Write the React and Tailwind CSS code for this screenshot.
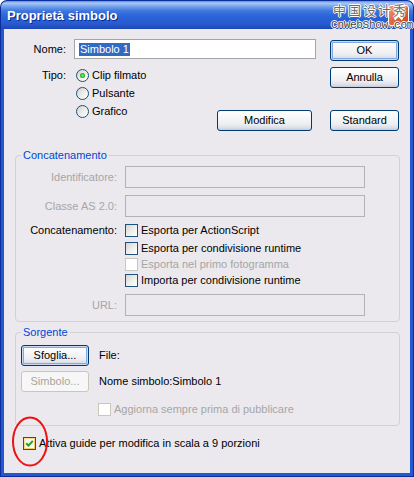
import React from "react";

function Btn({ children, className = "", def = false, disabled = false }) {
  const base = disabled
    ? "border-[#c9c7ba] bg-[#f7f7f7] text-[#a6a69a]"
    : "border-[#003c74] text-black bg-[linear-gradient(180deg,#ffffff_0%,#f7f7f7_35%,#eceef2_70%,#d9dde6_90%,#c3c9d6_100%)]";
  const d = def ? "shadow-[inset_0_0_0_1px_#c8daf8,inset_0_0_0_2px_#84a8e6]" : "";
  return (
    <div className={`flex items-center justify-center rounded-[3px] border text-[11px] ${base} ${d} ${className}`}>
      {children}
    </div>
  );
}

function Radio({ checked }) {
  return (
    <span className="flex items-center justify-center w-[13px] h-[13px] shrink-0 rounded-full border border-[#1c5180] bg-[linear-gradient(135deg,#d3d1cb_0%,#eeeeec_55%,#ffffff_100%)]">
      {checked && (
        <span className="w-[5px] h-[5px] rounded-full bg-[radial-gradient(circle,#7cf07c_0%,#2bb02b_60%,#168a16_100%)]" />
      )}
    </span>
  );
}

function Check({ disabled = false, checked = false, hover = false }) {
  if (disabled) {
    return <span className="w-[13px] h-[13px] shrink-0 border border-[#cac8bb] bg-white" />;
  }
  return (
    <span
      className={`flex items-center justify-center w-[13px] h-[13px] shrink-0 border border-[#1c5180] ${
        hover
          ? "bg-[linear-gradient(135deg,#fbe2a4_0%,#f9c25a_100%)]"
          : "bg-[linear-gradient(135deg,#d6d4cd_0%,#efefec_55%,#ffffff_100%)]"
      }`}
    >
      {hover && (
        <span className="flex items-center justify-center w-[9px] h-[9px] bg-[linear-gradient(135deg,#f3f2ed_0%,#ffffff_100%)]">
          {checked && (
            <svg width="9" height="9" viewBox="0 0 9 9">
              <path d="M1.2 4.2 L3.5 6.6 L7.8 1.8" fill="none" stroke="#21a121" strokeWidth="2" />
            </svg>
          )}
        </span>
      )}
    </span>
  );
}

export default function App() {
  return (
    <div className="relative w-[414px] h-[477px] overflow-hidden bg-white font-['Liberation_Sans',Arial,sans-serif]">
      <div className="flex flex-col w-[414px] h-[477px]">
        {/* Title bar */}
        <div className="relative flex items-center h-[29px] shrink-0 rounded-t-[7px] border-t border-x border-[#0a2f9c] bg-[linear-gradient(180deg,#5f90e4_0%,#a9c7f4_8%,#7ba6ec_18%,#3f77e0_35%,#2b63d8_55%,#285bd1_80%,#1e47b6_100%)] pl-[6px] pr-[4px]">
          <span className="text-white font-bold text-[13px] leading-[16px] mt-[2px] [text-shadow:1px_1px_0_#0b2a8a]">
            Proprietà simbolo
          </span>
          <div className="ml-auto mt-[1px] flex items-center justify-center w-[21px] h-[21px] rounded-[3px] border border-white bg-[linear-gradient(135deg,#ef9b7d_0%,#e06a44_45%,#c8441e_100%)]">
            <svg width="11" height="11" viewBox="0 0 11 11">
              <path d="M1.5 1.5 L9.5 9.5 M9.5 1.5 L1.5 9.5" stroke="#fff" strokeWidth="2" />
            </svg>
          </div>
          {/* watermark overlay */}
          <div className="absolute right-[0px] top-[-1px] flex flex-col items-end pointer-events-none">
            <span className="mr-[5px] font-['Noto_Sans_CJK_SC',sans-serif] text-[13px] leading-[19px] tracking-[2px] text-[#6a6a6a] [text-shadow:1px_0_0_#fff,-1px_0_0_#fff,0_1px_0_#fff,0_-1px_0_#fff]">
              中国设计秀
            </span>
            <span className="font-['Liberation_Mono',monospace] text-[11px] leading-[12px] tracking-[-0.3px] text-[#444] [text-shadow:1px_0_0_#fff,-1px_0_0_#fff,0_1px_0_#fff,0_-1px_0_#fff]">
              CnWebShow.com
            </span>
          </div>
        </div>

        {/* Body with frame */}
        <div className="flex flex-1 bg-[#2457d2] border-x border-b border-[#0a2f9c] px-[3px] pb-[3px]">
          <div className="relative flex flex-col flex-1 bg-[#ebe9ed] text-[11px] leading-[13px] text-black">
            {/* Top area */}
            <div className="flex items-start">
              <div className="flex flex-col w-[312px]">
                <div className="flex items-center mt-[10px] h-[20px]">
                  <span className="w-[62px] text-right">Nome:</span>
                  <div className="ml-[8px] flex items-center w-[242px] h-[20px] border border-[#a5a5a8] bg-white pl-[4px]">
                    <span className="bg-[#316ac5] text-white px-[1px] leading-[13px]">Simbolo 1</span>
                  </div>
                </div>
                <div className="flex items-start mt-[7px]">
                  <span className="w-[62px] text-right h-[18px] leading-[18px]">Tipo:</span>
                  <div className="flex flex-col ml-[10px]">
                    <div className="flex items-center h-[18px] gap-[3px]">
                      <Radio checked />
                      <span>Clip filmato</span>
                    </div>
                    <div className="flex items-center h-[18px] gap-[3px]">
                      <Radio />
                      <span>Pulsante</span>
                    </div>
                    <div className="flex items-center h-[18px] gap-[3px]">
                      <Radio />
                      <span>Grafico</span>
                    </div>
                  </div>
                  <Btn className="ml-auto mr-[4px] mt-[44px] w-[95px] h-[21px]">Modifica</Btn>
                </div>
              </div>
              <div className="flex flex-col ml-[14px] w-[69px]">
                <Btn def className="mt-[11px] h-[21px]">OK</Btn>
                <Btn className="mt-[6px] h-[21px]">Annulla</Btn>
                <Btn className="mt-[22px] h-[21px]">Standard</Btn>
              </div>
            </div>

            {/* Concatenamento */}
            <fieldset className="ml-[11px] mt-[18px] w-[385px] rounded-[4px] border border-[#d3d0d4] pb-[5px]">
              <legend className="ml-[5px] px-[2px] leading-[13px] text-[#0046d5]">Concatenamento</legend>
              <div className="flex items-center mt-[4px]">
                <span className="w-[101px] text-right text-[#a6a6a6]">Identificatore:</span>
                <div className="ml-[8px] w-[240px] h-[22px] border border-[#b3b2b6]" />
              </div>
              <div className="flex items-center mt-[7px]">
                <span className="w-[101px] text-right text-[#a6a6a6]">Classe AS 2.0:</span>
                <div className="ml-[8px] w-[240px] h-[22px] border border-[#b3b2b6]" />
              </div>
              <div className="flex items-start mt-[5px]">
                <span className="w-[101px] text-right h-[16px] leading-[16px]">Concatenamento:</span>
                <div className="flex flex-col ml-[8px]">
                  <div className="flex items-center h-[16px] gap-[3px]">
                    <Check />
                    <span>Esporta per ActionScript</span>
                  </div>
                  <div className="flex items-center h-[16px] gap-[3px] mt-[2px]">
                    <Check />
                    <span>Esporta per condivisione runtime</span>
                  </div>
                  <div className="flex items-center h-[16px] gap-[3px]">
                    <Check disabled />
                    <span className="text-[#a6a6a6]">Esporta nel primo fotogramma</span>
                  </div>
                  <div className="flex items-center h-[16px] gap-[3px]">
                    <Check />
                    <span>Importa per condivisione runtime</span>
                  </div>
                </div>
              </div>
              <div className="flex items-center mt-[6px]">
                <span className="w-[101px] text-right text-[#a6a6a6]">URL:</span>
                <div className="ml-[8px] w-[240px] h-[22px] border border-[#b3b2b6]" />
              </div>
            </fieldset>

            {/* Sorgente */}
            <fieldset className="ml-[11px] mt-[4px] w-[385px] rounded-[4px] border border-[#d3d0d4] pb-[8px]">
              <legend className="ml-[5px] px-[2px] leading-[13px] text-[#0046d5]">Sorgente</legend>
              <div className="flex items-center ml-[5px] mt-[6px]">
                <Btn def className="w-[68px] h-[21px]">Sfoglia...</Btn>
                <span className="ml-[10px]">File:</span>
              </div>
              <div className="flex items-center ml-[5px] mt-[5px]">
                <Btn disabled className="w-[68px] h-[21px]">Simbolo...</Btn>
                <span className="ml-[10px]">Nome simbolo:Simbolo 1</span>
              </div>
              <div className="flex items-center h-[16px] gap-[3px] ml-[82px] mt-[9px]">
                <Check disabled />
                <span className="text-[#a6a6a6]">Aggiorna sempre prima di pubblicare</span>
              </div>
            </fieldset>

            <div className="flex items-center h-[16px] gap-[3px] ml-[19px] mt-[9px]">
              <Check hover checked />
              <span>Attiva guide per modifica in scala a 9 porzioni</span>
            </div>
          </div>
        </div>
      </div>

      {/* red annotation ellipse */}
      <svg className="absolute left-[11px] top-[416px]" width="38" height="51" viewBox="0 0 38 51">
        <ellipse cx="19" cy="25.5" rx="17" ry="24" fill="none" stroke="#ee1111" strokeWidth="2" />
      </svg>
    </div>
  );
}
